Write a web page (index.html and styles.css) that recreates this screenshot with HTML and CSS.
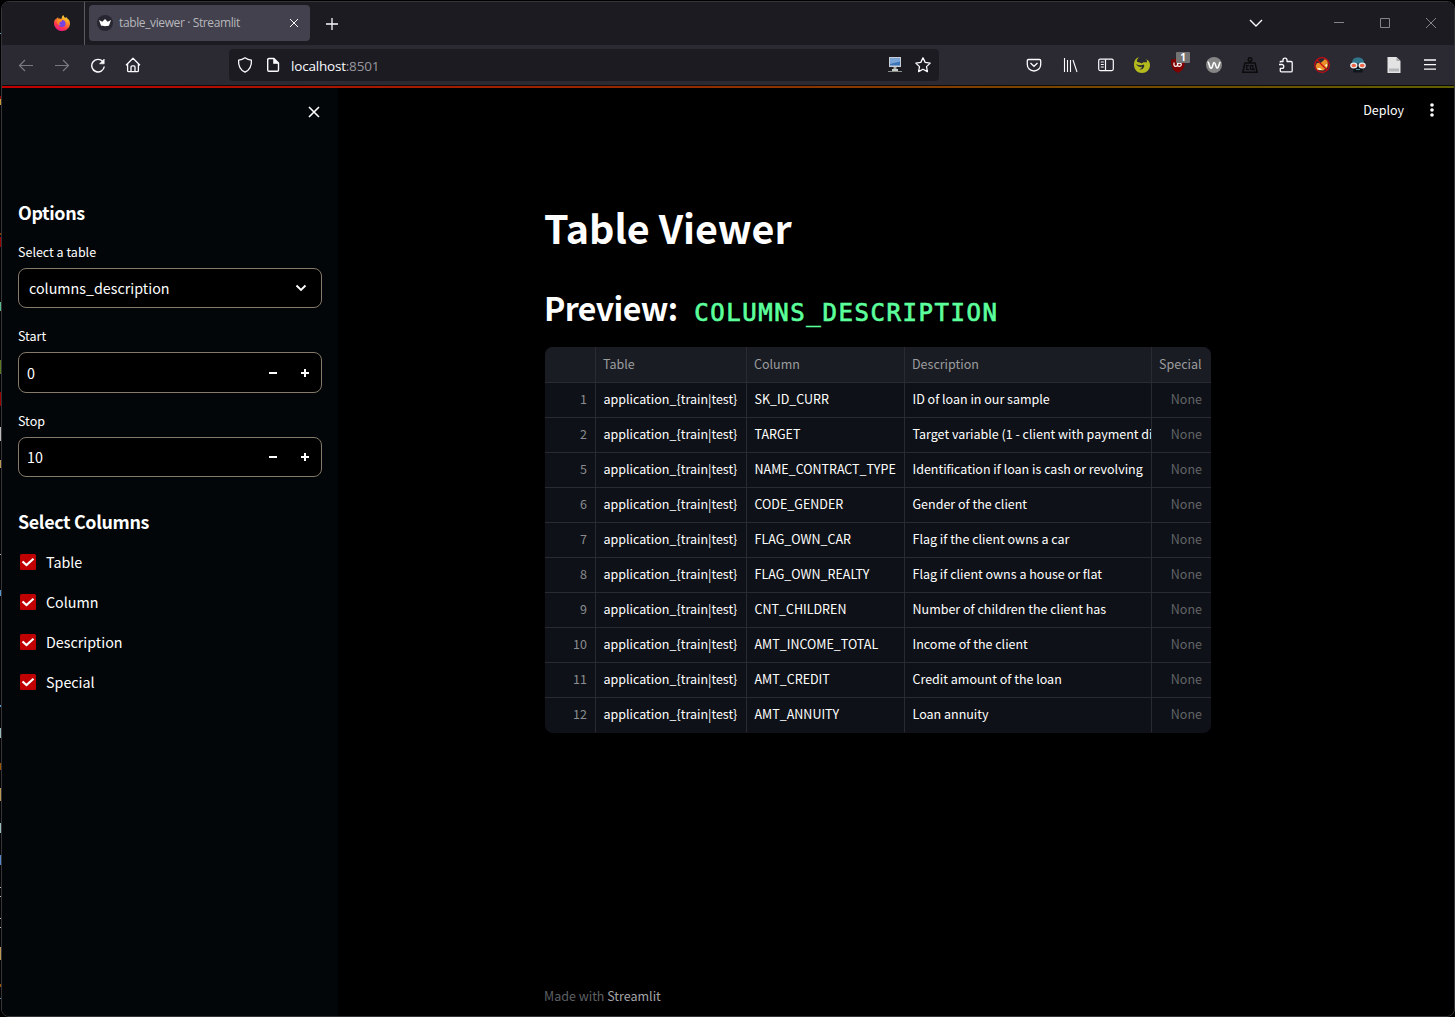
FILE: index.html
```html
<!DOCTYPE html>
<html lang="en">
<head>
<meta charset="utf-8">
<title>table_viewer · Streamlit</title>
<link rel="stylesheet" href="styles.css">
</head>
<body>
<div class="window">
  <header class="tabbar">
    <div class="pinned">
      <svg width="16" height="16" viewBox="0 0 16 16">
        <defs>
          <linearGradient id="flame" x1="0.8" y1="0" x2="0.3" y2="1"><stop offset="0" stop-color="#fff044"/><stop offset=".35" stop-color="#ff9a25"/><stop offset=".7" stop-color="#ff3b49"/><stop offset="1" stop-color="#e31587"/></linearGradient>
        </defs>
        <path d="M9.4 0c.2 1.700 1.200 2.400 2.200 3.200.3-.5.300-1 .2-1.500 1.200.8 2 1.900 2.400 3 .2-.2.200-.4.200-.7C15.300 5.300 16 7 16 8.500 16 12.700 12.500 16 8.200 16 3.700 16 0 12.500 0 8.200 0 6.500.6 4.900 1.600 3.700c0 .4.100.8.200 1.100.5-1.100 1.300-2 2.300-2.600 0 .6.100 1 .5 1.500 1.200-.3 2.200 0 2.800.3C7.700 2.600 8.200 1 9.400 0z" fill="url(#flame)"/>
        <circle cx="8" cy="8.600" r="3.500" fill="#7542e5"/>
        <path d="M3.500 4.200c2-.6 4 .1 4.700 1.500-.7 1.300-2.200 1-2.900 2-.4 1 .5 1.800 1.700 1.800-1.500 1-3.500 0-3.700-2z" fill="#ff8a24"/>
      </svg>
    </div>
    <div class="tab">
      <svg class="favicon" width="16" height="16" viewBox="0 0 16 16"><circle cx="8" cy="8" r="8" fill="#262730"/><path d="M2 5l3.300 1.700L8 4l2.700 2.700L14 5l-2 5.600c-1 .7-7 .7-8 0z" fill="#fff"/></svg>
      <span class="tab-title">table_viewer · Streamlit</span>
      <svg width="10" height="10" viewBox="0 0 10 10" fill="none" stroke="#fbfbfe"><path d="M1 1l8 8M9 1L1 9"/></svg>
    </div>
    <svg class="newtab" width="12" height="12" viewBox="0 0 12 12" fill="none" stroke="#fbfbfe" stroke-width="1.300"><path d="M6 0v12M0 6h12"/></svg>
    <div class="caption">
      <svg width="46" height="20" viewBox="0 0 46 20" fill="none" stroke="#fbfbfe" stroke-width="1.400"><path d="M17 6l6 6 6-6"/></svg>
      <span class="caption-gap"></span>
      <svg width="46" height="20" viewBox="0 0 46 20" fill="none" stroke="#85848b"><path d="M18 8.500h10"/></svg>
      <svg width="46" height="20" viewBox="0 0 46 20" fill="none" stroke="#85848b"><path d="M18.500 4.500h9v9h-9z"/></svg>
      <svg width="46" height="20" viewBox="0 0 46 20" fill="none" stroke="#85848b"><path d="M18 4l10 10M28 4L18 14"/></svg>
    </div>
  </header>

  <nav class="toolbar">
    <div class="nav-buttons">
      <svg width="16" height="16" viewBox="0 0 16 16" fill="none" stroke="#7a7981" stroke-width="1.200"><path d="M15 8.500H1.500M7 3L1.500 8.500 7 14"/></svg>
      <svg width="16" height="16" viewBox="0 0 16 16" fill="none" stroke="#7a7981" stroke-width="1.200"><path d="M1 8.500h13.500M9 3l5.500 5.500L9 14"/></svg>
      <svg width="16" height="16" viewBox="0 0 16 16" fill="none" stroke="#fbfbfe" stroke-width="1.400"><path d="M12.800 4.500A6.300 6.300 0 1 0 14.300 9.500"/><path d="M14.200 2v4.800H9.600z" fill="#fbfbfe" stroke-width=".6"/></svg>
      <svg class="home" width="16" height="16" viewBox="0 0 16 16" fill="none" stroke="#fbfbfe" stroke-width="1.300" stroke-linejoin="round"><path d="M1 8.200l7-7 7 7M2.600 7v6.500c0 .8.400 1.200 1.200 1.200h8.400c.8 0 1.200-.4 1.200-1.200V7M6 14.500V10c0-.8.400-1.200 1.200-1.200h1.600c.8 0 1.200.4 1.200 1.200v4.500"/></svg>
    </div>
    <div class="urlbar">
      <svg width="16" height="16" viewBox="0 0 16 16" fill="none" stroke="#fbfbfe" stroke-width="1.300" stroke-linejoin="round"><path d="M8 .8C6 2.200 4 2.900 1.600 3.100 1.200 8.500 3.400 13 8 15.200c4.600-2.200 6.800-6.700 6.400-12.100C12 2.900 10 2.200 8 .8z"/></svg>
      <svg class="page" width="16" height="16" viewBox="0 0 16 16" fill="none" stroke="#fbfbfe" stroke-width="1.400" stroke-linejoin="round"><path d="M4 1.500h5l4.500 4.500v7c0 .8-.5 1.300-1.300 1.300H4c-.8 0-1.300-.5-1.300-1.300V2.800C2.700 2 3.200 1.500 4 1.500z"/><path d="M8.500 1.500V6.500h5z" fill="#fbfbfe" stroke-width=".6"/></svg>
      <span class="url">localhost<span class="port">:8501</span></span>
      <svg width="16" height="16" viewBox="0 0 16 16"><path d="M2 0h12v10H2z" fill="#c9ced6"/><path d="M3 1.500h10v7H3z" fill="#3c74b8"/><path d="M3 1.500h10v3L3 7z" fill="#79a5d8"/><path d="M6.500 10h3v2.500h-3z" fill="#a6aaa6"/><path d="M5 12h6v2H5z" fill="#c9ccc7"/><path d="M1 14.500h14" stroke="#8b8f8b"/></svg>
      <svg class="star" width="16" height="16" viewBox="0 0 16 16" fill="none" stroke="#fbfbfe" stroke-width="1.300" stroke-linejoin="round"><path d="M8 .8l2.200 4.600 5 .7-3.700 3.500.9 5L8 12.200l-4.400 2.400.9-5L.8 6.100l5-.7z"/></svg>
    </div>
    <div class="extensions">
      <svg viewBox="0 0 16 16" fill="none" stroke="#fbfbfe" stroke-width="1.300"><path d="M2.500 2.500h11c.7 0 1.200.4 1.200 1.200V7.500C14.700 11 12 14 8 14S1.300 11 1.300 7.500V3.700c0-.8.500-1.200 1.200-1.200z"/><path d="M4.500 6L8 9.300 11.500 6"/></svg>
      <svg viewBox="0 0 16 16" fill="none" stroke="#fbfbfe" stroke-width="1.100"><path d="M2.500 1v14M5.500 3v12M8.500 3v12M11 3l4 12"/></svg>
      <svg viewBox="0 0 16 16" fill="none" stroke="#fbfbfe" stroke-width="1.200"><rect x=".7" y="2.200" width="14.600" height="11.400" rx="1.500"/><path d="M7.500 2.200v11.400M2.800 5h3M2.800 7.500h3M2.800 10h3"/></svg>
      <svg viewBox="0 0 16 16"><path d="M0 7C0 3.500 2 1 5 .3 3.300 1.800 2.600 3.400 3 4.800 5 5.300 6.500 6 7.500 6.500 9 5 11 5 12.500 5.500 13.500 4.500 13 3 11.500 2 14.500 2.800 16 5.300 16 8c0 4.500-3.500 8-8 8S0 12.500 0 8z" fill="#b4ba1e"/><path d="M2 7c2.500 1.500 5 1.500 8 .5C11 10.500 8.500 12.700 5.500 12.500 7 11.800 7.800 10.800 8 9.800 5.500 10.300 3.500 9.500 2 7z" fill="#2b2a33"/></svg>
      <svg viewBox="0 0 16 16"><path d="M1 2.500C4 2.500 6 1.800 8 .5c2 1.300 4 2 7 2C15 10 13.500 13 8 16 2.500 13 1 10 1 2.500z" fill="#800000"/><path d="M4 5.500V8c0 1.800 3.500 1.800 3.500 0V5.500M7.500 8c0 1.800 3.800 1.800 3.800-.3S8.500 5.800 7.500 7.500" fill="none" stroke="#fff" stroke-width="1.200"/></svg>
      <svg viewBox="0 0 16 16"><circle cx="8" cy="8" r="8" fill="#858585"/><path d="M1.500 5C3.300 4.500 3.200 11.300 5 11.300S6.700 5.500 8.200 5.500s1.500 5.800 3 5.800 1.600-5 3.200-6.300" fill="none" stroke="#fff" stroke-width="1.600"/></svg>
      <svg viewBox="0 0 16 16" fill="none" stroke="#0b0b0c" stroke-width="1.500"><circle cx="8" cy="2.500" r="1.800"/><path d="M8 4.500v1.500M3 6h10l2.200 9.200H.8z"/><path d="M7 8.700H4.700v3.800H7M8.500 8.700h2.300v3.800H8.500zM12 11.500v2" stroke-width="1.200"/></svg>
      <svg viewBox="0 0 16 16" fill="none" stroke="#fbfbfe" stroke-width="1.300" stroke-linejoin="round"><path d="M2.300 5.500V4.500H5V3c0-2.500 4-2.500 4 0v1.500h4c.8 0 1.200.4 1.200 1.200v8c0 .8-.4 1.200-1.200 1.200H3.500c-.8 0-1.200-.4-1.200-1.200v-2.400H4c2.400 0 2.400-3.800 0-3.800H1"/></svg>
      <svg viewBox="0 0 16 16"><path d="M3 6l3.500 0L9 4l2-2 2.500 2 .5 4-1 3-4 2.500L3 13 1.500 9z" fill="#e99128"/><path d="M3 11l3 0 2 2-3 0zM11 8l2-1v2l-1 1z" fill="#fff0d8"/><circle cx="8" cy="8" r="7.300" fill="none" stroke="#c90a14" stroke-width="1.200"/><path d="M3 3l10 10" stroke="#c90a14" stroke-width="1.200"/></svg>
      <svg viewBox="0 0 16 16"><path d="M2 6.500C2 2 4.500.5 8 .5S14 2 14 6.500z" fill="#31758b"/><path d="M3 9h10l-.5 6.500h-9z" fill="#10141b"/><path d="M6 12h4v1H6z" fill="#4c8b9b"/><ellipse cx="3.800" cy="8.500" rx="3" ry="2.300" fill="#ef6647" stroke="#e8edf0" stroke-width="1.300"/><ellipse cx="12.200" cy="8.500" rx="3" ry="2.300" fill="#ef6647" stroke="#e8edf0" stroke-width="1.300"/></svg>
      <svg viewBox="0 0 16 16"><path d="M1.500 0h9L14.500 4v12h-13z" fill="#e3e3e3"/><path d="M10.500 0v4h4z" fill="#aaa"/><path d="M3 11.500h10v3H3z" fill="#b4b6b9"/></svg>
      <svg viewBox="0 0 16 16" fill="none" stroke="#fbfbfe" stroke-width="1.300"><path d="M2 3h12M2 7.600h12M2 12.200h12"/></svg>
      <span class="badge">1</span>
    </div>
  </nav>
  <div class="decoration"></div>

  <div class="app">
    <aside class="sidebar">
      <div class="sidebar-top"><svg width="12" height="12" viewBox="0 0 12 12" fill="none" stroke="#fff" stroke-width="1.600"><path d="M1 1l10 10M11 1L1 11"/></svg></div>
      <h3 class="options-title">Options</h3>
      <label class="label">Select a table</label>
      <div class="control select"><span>columns_description</span><svg width="12" height="8" viewBox="0 0 12 8" fill="none" stroke="#fff" stroke-width="1.900"><path d="M1.500 1.500L6 6l4.500-4.500"/></svg></div>
      <label class="label">Start</label>
      <div class="control number tall"><span>0</span><i class="minus"></i><i class="plus"></i></div>
      <label class="label">Stop</label>
      <div class="control number"><span>10</span><i class="minus"></i><i class="plus"></i></div>
      <h3 class="columns-title">Select Columns</h3>
      <ul class="checks">
        <li><svg width="16" height="16" viewBox="0 0 16 16"><rect width="16" height="16" rx="1.500" fill="#c00000"/><path d="M2.500 7.500l4 3.600L13.500 4.700" fill="none" stroke="#fff" stroke-width="2.200"/></svg>Table</li>
        <li><svg width="16" height="16" viewBox="0 0 16 16"><rect width="16" height="16" rx="1.500" fill="#c00000"/><path d="M2.500 7.500l4 3.600L13.500 4.700" fill="none" stroke="#fff" stroke-width="2.200"/></svg>Column</li>
        <li><svg width="16" height="16" viewBox="0 0 16 16"><rect width="16" height="16" rx="1.500" fill="#c00000"/><path d="M2.500 7.500l4 3.600L13.500 4.700" fill="none" stroke="#fff" stroke-width="2.200"/></svg>Description</li>
        <li><svg width="16" height="16" viewBox="0 0 16 16"><rect width="16" height="16" rx="1.500" fill="#c00000"/><path d="M2.500 7.500l4 3.600L13.500 4.700" fill="none" stroke="#fff" stroke-width="2.200"/></svg>Special</li>
      </ul>
    </aside>

    <main class="main">
      <div class="app-header"><span>Deploy</span><svg width="4" height="14" viewBox="0 0 4 14" fill="#fff"><circle cx="2" cy="2" r="1.800"/><circle cx="2" cy="7" r="1.800"/><circle cx="2" cy="12" r="1.800"/></svg></div>
      <div class="content">
        <h1>Table Viewer</h1>
        <h2>Preview: <code>COLUMNS_DESCRIPTION</code></h2>
        <table>
          <colgroup><col class="c-index"><col class="c-table"><col class="c-column"><col class="c-desc"><col class="c-special"></colgroup>
          <thead><tr><th></th><th>Table</th><th>Column</th><th>Description</th><th>Special</th></tr></thead>
          <tbody>
            <tr><td>1</td><td>application_{train|test}</td><td>SK_ID_CURR</td><td>ID of loan in our sample</td><td>None</td></tr>
            <tr><td>2</td><td>application_{train|test}</td><td>TARGET</td><td>Target variable (1 - client with payment di</td><td>None</td></tr>
            <tr><td>5</td><td>application_{train|test}</td><td>NAME_CONTRACT_TYPE</td><td>Identification if loan is cash or revolving</td><td>None</td></tr>
            <tr><td>6</td><td>application_{train|test}</td><td>CODE_GENDER</td><td>Gender of the client</td><td>None</td></tr>
            <tr><td>7</td><td>application_{train|test}</td><td>FLAG_OWN_CAR</td><td>Flag if the client owns a car</td><td>None</td></tr>
            <tr><td>8</td><td>application_{train|test}</td><td>FLAG_OWN_REALTY</td><td>Flag if client owns a house or flat</td><td>None</td></tr>
            <tr><td>9</td><td>application_{train|test}</td><td>CNT_CHILDREN</td><td>Number of children the client has</td><td>None</td></tr>
            <tr><td>10</td><td>application_{train|test}</td><td>AMT_INCOME_TOTAL</td><td>Income of the client</td><td>None</td></tr>
            <tr><td>11</td><td>application_{train|test}</td><td>AMT_CREDIT</td><td>Credit amount of the loan</td><td>None</td></tr>
            <tr><td>12</td><td>application_{train|test}</td><td>AMT_ANNUITY</td><td>Loan annuity</td><td>None</td></tr>
          </tbody>
        </table>
      </div>
      <footer>Made with <a>Streamlit</a></footer>
    </main>
  </div>
</div>
</body>
</html>
```

FILE: styles.css
```css
* { box-sizing: border-box; }

/* the gradient draws slivers of the desktop visible left of the window */
body {
  margin: 0;
  width: 1455px;
  height: 1017px;
  overflow: hidden;
  padding: 1px 0 0 1px;
  font-family: "Noto Sans CJK JP", "Noto Sans CJK SC", sans-serif;
  color: #fff;
  background:
    linear-gradient(#000 0 33px, #5ab 33px 34px, #000 34px 96px, #900 96px 99px, #c93 99px 105px, #000 105px 233px, #8a3a00 233px 235px, #000 235px 237px, #900 237px 247px, #000 247px 302px, #5b8 302px 311px, #000 311px 360px, #5a7a20 360px 374px, #000 374px 392px, #900 392px 406px, #000 406px 427px, #bbb 427px 441px, #000 441px 460px, #b95 460px 468px, #000 468px 554px, #bbb 554px 555px, #000 555px 590px, #59c 590px 596px, #000 596px 705px, #59c 705px 707px, #000 707px 728px, #9bb 728px 738px, #000 738px 763px, #950 763px 770px, #000 770px 788px, #b95 788px 801px, #000 801px 823px, #9bb 823px 833px, #000 833px 855px, #58c 855px 865px, #000 865px 887px, #bbb 887px 888px, #000 888px 896px, #bbb 896px 897px, #000 897px 918px, #bbb 918px 919px, #000 919px 927px, #bbb 927px 928px, #000 928px 947px, #b95 947px 960px, #000 960px 984px, #950 984px 987px, #000 987px 998px, #58a 998px 999px, #000 999px) 0 0 / 1px 1017px no-repeat,
    #000;
}

.window {
  display: flex;
  flex-direction: column;
  width: 1454px;
  height: 1016px;
  border: 1px solid #353438;
  border-radius: 8px;
  overflow: hidden;
  background: #000;
}

.tabbar {
  display: flex;
  align-items: center;
  flex: none;
  height: 43px;
  background: #1c1b22;
  font-family: "Open Sans", "Noto Sans", sans-serif;
}
.pinned {
  display: flex;
  align-items: center;
  justify-content: flex-end;
  width: 83px;
  height: 43px;
  padding-right: 14px;
  padding-bottom: 1px;
  border-right: 1px solid #5b5a60;
}
.tab {
  display: flex;
  align-items: center;
  width: 221px;
  height: 36px;
  margin: 0 0 1px 4px;
  padding: 0 11px 0 8px;
  border-radius: 4px;
  background: #42414d;
  font-size: 12px;
}
.tab-title { flex: 1; margin-left: 6px; line-height: 20px; letter-spacing: -.38px; color: #b8b7bc; white-space: nowrap; }
.newtab { margin-left: 16px; }
.caption { display: flex; margin-left: auto; }
.caption-gap { width: 37px; }

.toolbar {
  position: relative;
  display: flex;
  align-items: center;
  flex: none;
  height: 40px;
  background: #2b2a33;
  font-family: "Open Sans", "Noto Sans", sans-serif;
}
.nav-buttons { display: flex; gap: 20px; width: 227px; padding-left: 16px; }
.home { margin-left: -1px; }
.urlbar {
  display: flex;
  align-items: center;
  width: 710px;
  height: 32px;
  padding: 0 8px;
  border-radius: 4px;
  background: #1c1b22;
}
.page { margin-left: 12px; }
.url { flex: 1; margin-left: 10px; padding-top: 2px; font-size: 13.5px; line-height: 20px; letter-spacing: -.2px; color: #fbfbfe; }
.port { color: #98979d; }
.star { margin-left: 12px; }
.extensions { position: relative; display: flex; margin-left: auto; padding-right: 16px; gap: 20px; }
.extensions svg { width: 16px; height: 16px; }
.badge {
  position: absolute;
  left: 150px;
  top: -5px;
  width: 14px;
  height: 11px;
  border-radius: 1px;
  background: #737373;
  font: bold 10px/11px "Open Sans", sans-serif;
  text-align: center;
}
.decoration {
  flex: none;
  height: 3px;
  border-top: 1px solid #0c0c0d;
  background: linear-gradient(90deg, #c00000, #606000);
}

.app { display: flex; flex: 1; min-height: 0; }
.sidebar { width: 336px; padding: 0 16px; background: #020609; }
.sidebar-top { display: flex; justify-content: flex-end; height: 109px; padding: 18px 2px 0 0; }
h1, h2, h3 { margin: 0; }
h3 { font-size: 17.900px; line-height: 24px; font-weight: 600; letter-spacing: -.35px; }
.options-title { margin-top: 3px; }
.label { display: block; margin-top: 17px; line-height: 22px; font-size: 12.500px; }
.control {
  display: flex;
  align-items: center;
  height: 40px;
  margin-top: 5px;
  border: 1px solid #857969;
  border-radius: 8px;
  background: #000;
  font-size: 14.300px;
  line-height: 24px;
}
.control span { flex: 1; }
.tall { height: 41px; }
.select { padding: 0 14px 0 10px; }
.number { padding: 0 12px 0 8px; }
.minus, .plus { width: 8px; height: 8px; background: linear-gradient(#fff, #fff) center / 8px 2px no-repeat; }
.plus { margin-left: 24px; background: linear-gradient(#fff, #fff) center / 8px 2px no-repeat, linear-gradient(#fff, #fff) center / 2px 8px no-repeat; }
.columns-title { margin-top: 32px; }
.checks { list-style: none; margin: 9px 0 0; padding: 0 0 0 2px; }
.checks li { display: flex; align-items: center; height: 40px; gap: 10px; font-size: 14.300px; line-height: 24px; }

.main { display: flex; flex-direction: column; flex: 1; min-width: 0; }
.app-header {
  display: flex;
  align-items: center;
  justify-content: flex-end;
  gap: 26px;
  height: 44px;
  padding-right: 20px;
  font-size: 12.500px;
  line-height: 20px;
}
.content { width: 667px; margin-left: 206px; padding-top: 69px; }
h1 { height: 52px; font-size: 39.450px; line-height: 52px; font-weight: 700; white-space: nowrap; }
h2 { height: 43px; margin-top: 33px; font-size: 32.100px; line-height: 43px; font-weight: 600; letter-spacing: -.6px; white-space: nowrap; }
h2 code {
  margin-left: 10px;
  font-family: "DejaVu Sans Mono", monospace;
  font-size: 24px;
  font-weight: 400;
  letter-spacing: 1.570px;
  color: #5cff9c;
  -webkit-text-stroke: .7px #5cff9c;
}
table {
  width: 666px;
  margin: 18px 0 0 1px;
  table-layout: fixed;
  border-collapse: separate;
  border-spacing: 0;
  border-radius: 8px;
  overflow: hidden;
  background: #0e1117;
  font-size: 12.500px;
  line-height: 20px;
}
.c-index { width: 51px; }
.c-table { width: 151px; }
.c-column { width: 158px; }
.c-desc { width: 247px; }
.c-special { width: 59px; }
th, td {
  height: 35px;
  padding: 0 0 2px 7.500px;
  border-right: 1px solid #292b30;
  border-bottom: 1px solid #292b30;
  overflow: hidden;
  white-space: nowrap;
  text-align: left;
  font-weight: 400;
}
th { height: 36px; padding-left: 7px; background: #1a1c23; color: #9b9c9e; }
td:first-child { padding: 0 8px 2px 0; text-align: right; color: #8a8c90; }
th:last-child, td:last-child { border-right: 0; }
td:last-child { padding: 0 9px 2px 0; text-align: right; color: #626467; }
tbody tr:last-child td { border-bottom-color: transparent; }
footer { margin: auto 0 10px 206px; font-size: 12.500px; line-height: 20px; color: #5e6064; }
footer a { color: #a5a5a8; }
```
